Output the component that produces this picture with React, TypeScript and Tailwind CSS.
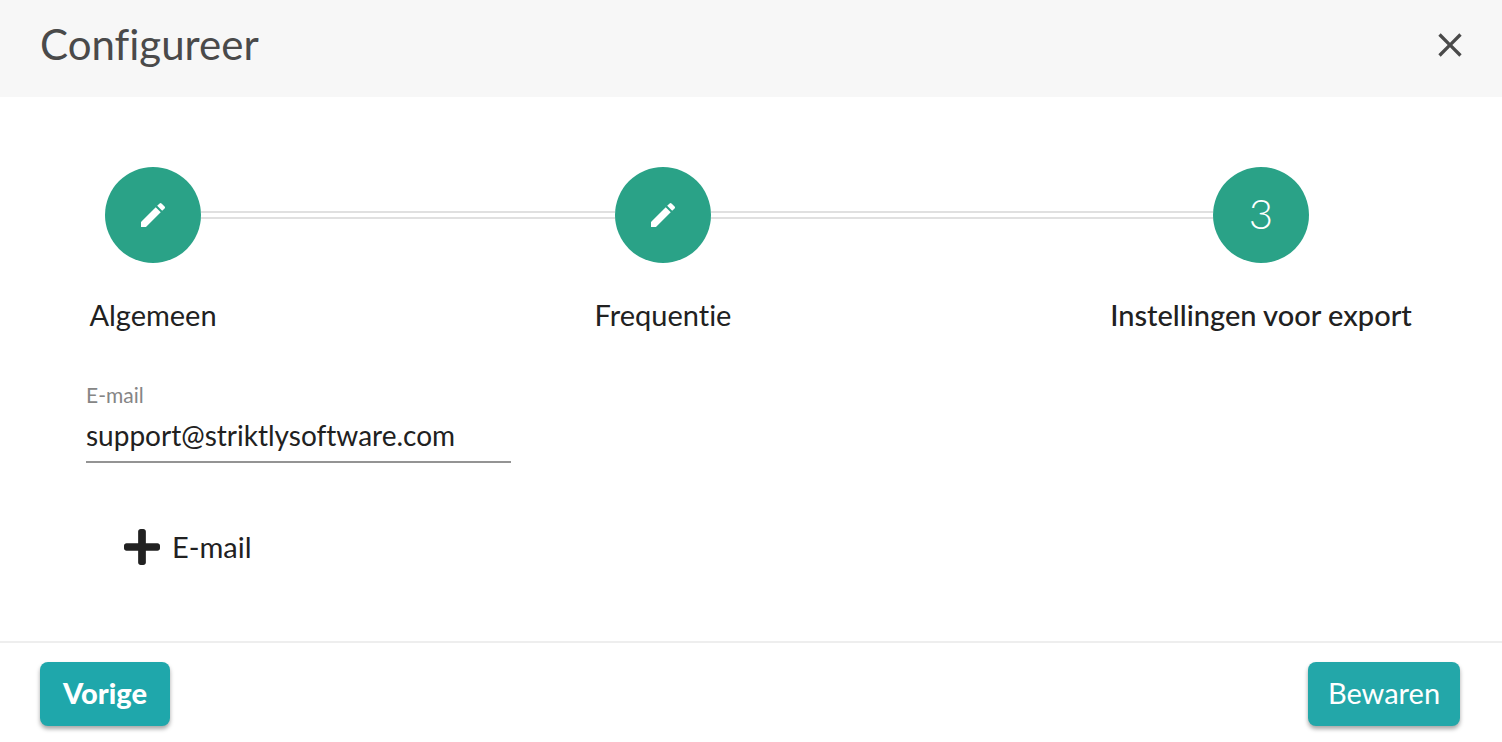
import { Fragment, useState } from "react"
import { FaPlus } from "react-icons/fa"
import { MdClose, MdEdit } from "react-icons/md"

interface Step {
    label: string
    done: boolean
    width: string
}

const steps: Step[] = [
    { label: "Algemeen", done: true, width: "min-w-[134px]" },
    { label: "Frequentie", done: true, width: "min-w-[134px]" },
    { label: "Instellingen voor export", done: false, width: "min-w-[310px]" },
]

function Line({ hidden = false }: { hidden?: boolean }) {
    return <div className={`h-2 flex-1 ${hidden ? "" : "border-y-2 border-[#e0e0e0]"}`} />
}

function Stepper() {
    return (
        <div className="flex">
            {steps.map((step, index) => (
                <Fragment key={step.label}>
                    {index > 0 && (
                        <div className="flex h-24 flex-1 items-center">
                            <Line />
                        </div>
                    )}
                    <button
                        type="button"
                        aria-current={step.done ? undefined : "step"}
                        className={`flex flex-col items-stretch ${step.width}`}
                    >
                        <div className="flex h-24 items-center">
                            <Line hidden={index === 0} />
                            <span className="flex h-24 w-24 items-center justify-center rounded-full bg-[#2aa287] pb-1 text-[42px] leading-none font-light text-white">
                                {step.done ? <MdEdit className="mt-1 h-8 w-8" /> : index + 1}
                            </span>
                            <Line hidden={index === steps.length - 1} />
                        </div>
                        <span
                            className={`mt-8 text-center text-[29px] leading-10 whitespace-nowrap ${step.done ? "" : "font-medium"}`}
                        >
                            {step.label}
                        </span>
                    </button>
                </Fragment>
            ))}
        </div>
    )
}

export default function App() {
    const [email, setEmail] = useState("support@striktlysoftware.com")

    return (
        <div className="flex min-h-screen flex-col bg-white font-['Lato',sans-serif] text-[#212121] [font-variant-ligatures:no-common-ligatures]">
            <header className="flex items-center justify-between bg-[#f7f7f7] pt-5 pr-8 pb-7 pl-10 text-[#4a4a4a]">
                <h1 className="text-[42px] leading-[49px]">Configureer</h1>
                <button type="button" aria-label="Sluiten">
                    <MdClose className="h-10 w-10" />
                </button>
            </header>

            <main className="flex-1 px-[86px] pt-[70px]">
                <Stepper />

                {/* Email field */}
                <div className="mt-12 flex w-[425px] flex-col border-b-2 border-[#949494]">
                    <label htmlFor="email" className="text-[21px] leading-6 text-[#858585]">
                        E-mail
                    </label>
                    <input
                        id="email"
                        type="email"
                        value={email}
                        onChange={(e) => setEmail(e.target.value)}
                        className="mt-2 h-[46px] w-full pb-1.5 text-[28px] leading-10 outline-none"
                    />
                </div>

                <button type="button" className="mt-[62px] ml-[38px] flex items-center gap-3 text-[29px] leading-10">
                    <FaPlus className="h-11 w-9" />
                    E-mail
                </button>
            </main>

            <footer className="flex items-center justify-between border-t-2 border-[#eeeeee] pt-[19px] pr-[42px] pb-4 pl-10 text-[29px] text-white">
                <button
                    type="button"
                    className="h-16 min-w-[130px] rounded-lg bg-[#1fa7ab] px-4 pb-0.5 font-black shadow-[0_3px_4px_rgba(0,0,0,0.35)]"
                >
                    Vorige
                </button>
                <button
                    type="button"
                    className="h-16 min-w-[152px] rounded-lg bg-[#23a7a9] px-4 pb-0.5 shadow-[0_3px_4px_rgba(0,0,0,0.35)]"
                >
                    Bewaren
                </button>
            </footer>
        </div>
    )
}
